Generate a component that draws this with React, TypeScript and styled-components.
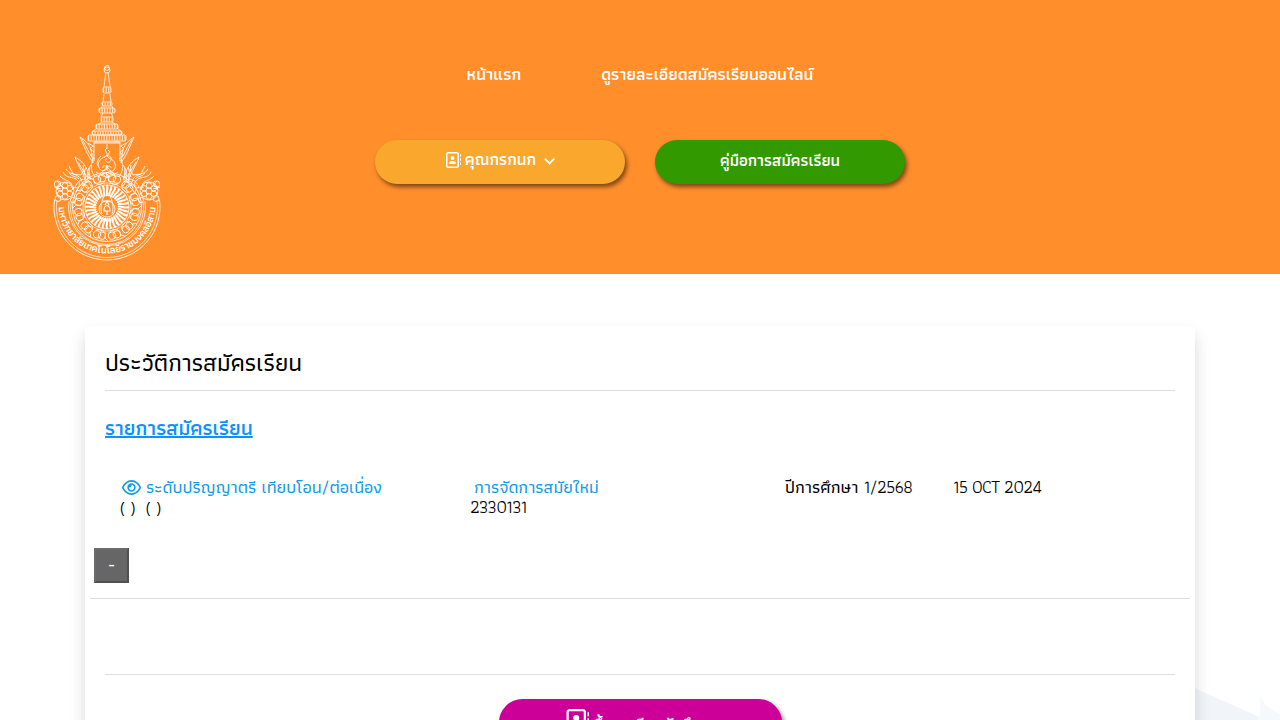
import React from 'react';
import styled, { createGlobalStyle } from 'styled-components';
import { FaRegAddressBook, FaRegEye } from 'react-icons/fa6';
import { BiChevronDown } from 'react-icons/bi';

const GlobalStyle = createGlobalStyle`
  * { box-sizing: border-box; }
  body {
    margin: 0;
    background: #fff;
    color: #000;
    overflow: hidden;
    font-family: Athiti, "Noto Sans Thai", "Noto Sans", sans-serif;
    font-size: 17.6px;
    font-weight: 500;
    line-height: 20px;
  }
`;

const Page = styled.div`
  position: relative;
  height: 720px;
  overflow: hidden;
`;

const Header = styled.header`
  display: grid;
  grid-template-columns: 375px 530px 1fr;
  height: 274px;
  background: #ff8e2b;
`;

const LogoLink = styled.a`
  padding: 60px 0 0 45px;
  svg { display: block; }
`;

const HeaderMain = styled.div`
  display: flex;
  flex-direction: column;
  padding-top: 64px;
  gap: 56px;
`;

const Nav = styled.nav`
  display: flex;
  justify-content: center;
  gap: 80px;
`;

const NavLink = styled.a`
  color: #fff;
  font-size: 17px;
  font-weight: 600;
  line-height: 20px;
  white-space: nowrap;
`;

const Actions = styled.div`
  display: flex;
  gap: 30px;
`;

const Pill = styled.a<{ $bg: string; $w: number; $h: number; $size: number }>`
  display: flex;
  align-items: center;
  justify-content: center;
  width: ${p => p.$w}px;
  height: ${p => p.$h}px;
  padding-bottom: 4px;
  flex: none;
  border-radius: 50px;
  background: ${p => p.$bg};
  color: #fff;
  font-size: ${p => p.$size}px;
  font-weight: 600;
  white-space: nowrap;
  box-shadow: 2px 3px 4px rgba(0, 0, 0, 0.5);
`;

const PillLabel = styled.span<{ $left?: number; $right?: number; $top?: number }>`
  margin: ${p => p.$top ?? 0}px ${p => p.$right ?? 0}px 0 ${p => p.$left ?? 0}px;
`;

const PillIcon = styled.span<{ $left?: number }>`
  display: flex;
  margin-left: ${p => p.$left ?? 0}px;
`;

const Backdrop = styled.svg`
  position: absolute;
  right: 0;
  bottom: 0;
`;

const Card = styled.main`
  position: relative;
  width: 1110px;
  height: 560px;
  margin: 52px auto 0;
  padding: 20px;
  border-radius: 5px;
  background: #fff;
  box-shadow: 0 8px 16px rgba(0, 0, 0, 0.15);
`;

const Title = styled.h1`
  margin: 0;
  height: 45px;
  padding-top: 2px;
  border-bottom: 1px solid #dedede;
  font-size: 24.5px;
  font-weight: 500;
  line-height: 30px;
`;

const ListTitle = styled.h2`
  margin: 25px 0 0;
  color: #0a92ff;
  font-size: 20.7px;
  font-weight: 600;
  line-height: 24px;
  text-decoration: underline;
  text-decoration-thickness: 2px;
`;

const Row = styled.div`
  display: grid;
  grid-template-columns: 350px 315px 168px 1fr;
  height: 84px;
  padding: 37px 0 0 15px;
`;

const Cell = styled.div`
  white-space: pre;
`;

const Latin = styled.span`
  font-weight: 400;
  letter-spacing: -0.75px;
`;

const Brackets = styled.span`
  font-family: "Bai Jamjuree", "Noto Sans", sans-serif;
  font-size: 16px;
  font-weight: 400;
  letter-spacing: 0.7px;
`;

const Link = styled.a<{ $indent: number }>`
  display: flex;
  align-items: center;
  gap: 5px;
  height: 20px;
  padding-left: ${p => p.$indent}px;
  color: #129be6;
`;

const Toggle = styled.button`
  display: block;
  width: 35px;
  height: 35px;
  margin: 24px 0 0 -11px;
  padding: 0 0 2px;
  border: 2px solid;
  border-color: #6b6b6b #505050 #505050 #6b6b6b;
  background: #666;
  color: #fff;
  font: inherit;
`;

const RowRule = styled.div`
  height: 1px;
  margin: 15px -15px 0;
  background: #dedede;
`;

const Footer = styled.div`
  display: flex;
  justify-content: center;
  margin-top: 75px;
  padding-top: 24px;
  border-top: 1px solid #dedede;
`;

const rays = Array.from({ length: 32 }, (_, i) => i * 11.25);
const petals = Array.from({ length: 12 }, (_, i) => i * 30 + 15);
const tiers = [
  { y: 27, w: 4, h: 6 },
  { y: 42, w: 5, h: 4 },
  { y: 48, w: 8, h: 5 },
  { y: 57, w: 6, h: 5 },
  { y: 64, w: 11, h: 5 },
  { y: 71, w: 15, h: 4 },
  { y: 75, w: 19, h: 6 },
];

function HalfCrest() {
  return (
    <g fill="none" stroke="#fff" strokeWidth=".85">
      <path d="M62 82H49V101M35 77c5 3 9 7 11 12l2 14-6-10zM37 79l9 17M30 97c7 4 12 9 14 19l-3 7c-2-10-7-15-11-26zM33 102l9 15" />
      <path d="M43 83l5 3-3 3 4 3-3 4 4 3M48 100c-3 6-2 11 2 17M46 105c-6 8-4 15 0 21M41 107l-3 10M38 105l3 15" />
      <path d="M18 112c3 7 10 4 14 8 5 4 1 10-4 7M21 109c3 6 11 4 15 10l3 8-7 8M15 116c5 6 14 4 11 12M12 121l6 7M9 127l7 2M24 106l4 8 8 1 3-6" />
      <path d="M43 122c-6 1-10 5-12 10M40 119c-5 0-8 4-10 8M57 114c5-2 7 3 3 5M53 117c5-8 8-6 9-12M24 113c3 4 7 3 10 6M44 108l1 12" />
      <circle cx="20" cy="131" r="9" />
      <circle cx="20" cy="131" r="3" />
      {[0, 60, 120, 180, 240, 300].map(a => (
        <circle key={a} cx="20" cy="125.500" r="2.800" transform={`rotate(${a} 20 131)`} />
      ))}
      <circle cx="12.500" cy="124" r="3.200" />
      <circle cx="13" cy="138.500" r="3" />
      <circle cx="28" cy="140" r="2.600" />
    </g>
  );
}

function Crest() {
  return (
    <svg width="125" height="205" viewBox="0 0 125 205" aria-hidden="true">
      <g fill="none" stroke="#fff" strokeWidth=".8">
        <circle cx="62" cy="8" r="2.400" />
        <circle cx="62" cy="10" r="3" />
        <path d="M61 12l-2 15M63 12l2 15M59 34l-1 8M65 34l1 8" />
        {tiers.map(t => (
          <g key={t.y}>
            <rect x={62 - t.w} y={t.y} width={t.w * 2} height={t.h} rx="1.500" />
            <path d={`M${62 - t.w} ${t.y + t.h / 2}H${62 + t.w}`} strokeWidth={t.h - 1} strokeDasharray="1.200 1.400" opacity=".75" />
          </g>
        ))}
        <path d="M57 46l-1 3M67 46l1 3M58 53l-2 4M66 53l2 4M57 62l-4 3M67 62l4 3M52 68l-5 4M72 68l5 4M49 83h26" />
        <path d="M62 84v5M62 88c-5 3 3 5-1 8-7 3-9 7-7 12 2 4 8 3 8 0s-5-3-4 0M63 90c5 3-4 5 1 8 6 2 8 8 5 12-3 3-8 1-7-2s4-2 4 0M59 98c2-3 6-3 7 0s-2 5-4 4-2-3 0-3M56 96c-3 3-5 7-3 10M51 112c5 3 8 5 11 5s7-2 11-5" />
      </g>
      <HalfCrest />
      <g transform="matrix(-1 0 0 1 124 0)"><HalfCrest /></g>
      <g fill="none" stroke="#fff">
        <path d="M9.500 139.700A53 53 0 1 0 114.500 139.700" strokeWidth=".9" />
        <path d="M12 140A50.500 50.500 0 1 0 112 140" strokeWidth=".7" />
        <path d="M24 141A38.500 38.500 0 1 0 100 141" strokeWidth=".8" />
        <path d="M26 142A36.500 36.500 0 1 0 98 142" strokeWidth=".7" />
        <circle cx="62" cy="147" r="34.500" strokeWidth=".9" />
        <circle cx="62" cy="147" r="24" strokeWidth=".6" />
        {petals.map(a => (
          <g key={a} transform={`rotate(${a} 62 147)`} strokeWidth=".9">
            <circle cx="59.500" cy="118" r="3.600" />
            <circle cx="64.500" cy="118" r="3.600" />
            <path d="M57 121c1 3 9 3 10 0M70 114l2 4-2 4" />
          </g>
        ))}
        {rays.map(a => (
          <path key={a} d="M62 136c-2-3 2-6 0-11" strokeWidth="2" transform={`rotate(${a} 62 147)`} />
        ))}
        <circle cx="62" cy="147" r="22" strokeWidth=".8" />
        <circle cx="62" cy="149" r="8" strokeWidth=".8" />
        <path d="M62 127v9M59 136c-3 6-4 12-2 18M65 136c3 6 4 12 2 18M57 141h10M54 157c5 4 11 4 16 0M56 161h12" strokeWidth=".9" />
        <path d="M59 151c0-7 6-7 6 0zM60 145l2-4 2 4M62 151v4" strokeWidth="1.200" />
      </g>
      <path id="crestArc" d="M13.500 145A48.500 48.500 0 0 0 110.500 145" fill="none" />
      <text fill="#fff" fontSize="10.200" fontWeight="600" textAnchor="middle">
        <textPath href="#crestArc" startOffset="50%">มหาวิทยาลัยเทคโนโลยีราชมงคลอีสาน</textPath>
      </text>
    </svg>
  );
}

export default function App() {
  return (
    <Page>
      <GlobalStyle />
      <Header>
        <LogoLink><Crest /></LogoLink>
        <HeaderMain>
          <Nav>
            <NavLink>หน้าแรก</NavLink>
            <NavLink>ดูรายละเอียดสมัครเรียนออนไลน์</NavLink>
          </Nav>
          <Actions>
            <Pill $bg="#f9a82d" $w={250} $h={44} $size={16.8}>
              <PillIcon $left={6}><FaRegAddressBook size={16} /></PillIcon>
              <PillLabel $left={4} $right={2}>คุณกรกนก</PillLabel>
              <BiChevronDown size={23} />
            </Pill>
            <Pill $bg="#339900" $w={250} $h={44} $size={16.3}>
              <PillLabel>คู่มือการสมัครเรียน</PillLabel>
            </Pill>
          </Actions>
        </HeaderMain>
      </Header>
      <Backdrop width="90" height="40" viewBox="0 0 90 40">
        <path d="M0 6L72 38 76 40H0z" fill="#f1f5fa" />
        <path d="M70 14c2 8 6 12 20 20v6H68c3-7 2-16 2-26z" fill="#f6f9fc" />
      </Backdrop>
      <Card>
        <Title>ประวัติการสมัครเรียน</Title>
        <ListTitle>รายการสมัครเรียน</ListTitle>
        <Row>
          <Cell>
            <Link $indent={2}><FaRegEye size={19} />ระดับปริญญาตรี เทียบโอน/ต่อเนื่อง</Link>
            <Brackets>{'( )  ( )'}</Brackets>
          </Cell>
          <Cell>
            <Link $indent={4}>การจัดการสมัยใหม่</Link>
            <Latin>2330131</Latin>
          </Cell>
          <Cell>ปีการศึกษา <Latin>1/2568</Latin></Cell>
          <Cell><Latin>15 OCT 2024</Latin></Cell>
        </Row>
        <Toggle>-</Toggle>
        <RowRule />
        <Footer>
          <Pill $bg="#cc0099" $w={283} $h={47} $size={16.3}>
            <PillIcon $left={3}><FaRegAddressBook size={24} /></PillIcon>
            <PillLabel $left={6} $top={6}>ขึ้นทะเบียนนักศึกษา</PillLabel>
          </Pill>
        </Footer>
      </Card>
    </Page>
  );
}
